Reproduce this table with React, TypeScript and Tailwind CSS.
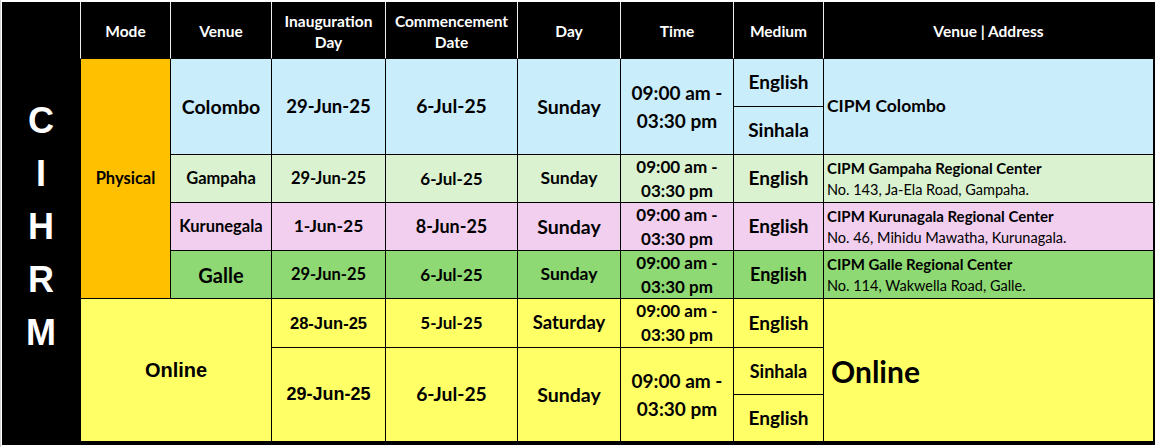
import React from 'react';

// shared cell styles
const line = 'border-r border-b border-black';
const cell = `flex items-center justify-center text-center ${line}`;
const addr = 'flex flex-col justify-center items-start pl-[3px] border-b border-black';
const arial = "font-[family-name:'Liberation_Sans',sans-serif]";

const Head = ({ children, first, last }: { children: React.ReactNode; first?: boolean; last?: boolean }) => (
  <div
    className={`flex items-center justify-center text-center pt-[3px] bg-black text-white text-[15.5px] leading-[21px] border-b border-b-black ${
      last ? '' : 'border-r border-r-[#eeeeee]'
    } ${first ? 'border-l border-l-[#eeeeee]' : ''}`}
  >
    {children}
  </div>
);

export default function App() {
  return (
    <div className="min-h-screen bg-white border-l border-[#d4d4d4] pl-px pt-[2px] font-[family-name:Lato,sans-serif] font-bold text-black">
      <div className="grid w-max grid-cols-[78px_91px_101px_114px_132px_103px_113px_90px_329px] grid-rows-[57px_48px_48px_48px_48px_48px_49px_47px_47px] border-r-2 border-b-[3px] border-black">
        {/* side label */}
        <div className={`row-span-9 bg-black flex flex-col items-center justify-center pt-[9px] text-white text-[36px] leading-[53px] ${arial}`}>
          <span>C</span>
          <span>I</span>
          <span>H</span>
          <span>R</span>
          <span>M</span>
        </div>

        {/* header */}
        <Head first>Mode</Head>
        <Head>Venue</Head>
        <Head>
          Inauguration
          <br />
          Day
        </Head>
        <Head>
          Commencement
          <br />
          Date
        </Head>
        <Head>Day</Head>
        <Head>Time</Head>
        <Head>Medium</Head>
        <Head last>Venue | Address</Head>

        {/* Colombo */}
        <div className={`${cell} border-l row-span-5 bg-[#ffc000] text-[16.5px]`}>Physical</div>
        <div className={`${cell} row-span-2 bg-[#caedfb] text-[19.5px]`}>Colombo</div>
        <div className={`${cell} row-span-2 bg-[#caedfb] text-[18.5px]`}>29-Jun-25</div>
        <div className={`${cell} row-span-2 bg-[#caedfb] text-[19.3px]`}>6-Jul-25</div>
        <div className={`${cell} row-span-2 bg-[#caedfb] text-[19.5px]`}>Sunday</div>
        <div className={`${cell} row-span-2 bg-[#caedfb] text-[19px] leading-[28px]`}>
          09:00 am -
          <br />
          03:30 pm
        </div>
        <div className={`${cell} bg-[#caedfb] text-[19px]`}>English</div>
        <div className={`${addr} row-span-2 bg-[#caedfb] text-[17.5px]`}>CIPM Colombo</div>
        <div className={`${cell} bg-[#caedfb] text-[19px]`}>Sinhala</div>

        {/* Gampaha */}
        <div className={`${cell} bg-[#daf2d0] text-[16.5px]`}>Gampaha</div>
        <div className={`${cell} bg-[#daf2d0] text-[16.5px]`}>29-Jun-25</div>
        <div className={`${cell} bg-[#daf2d0] text-[17px]`}>6-Jul-25</div>
        <div className={`${cell} bg-[#daf2d0] text-[17.5px]`}>Sunday</div>
        <div className={`${cell} bg-[#daf2d0] text-[17px] leading-[24px]`}>
          09:00 am -
          <br />
          03:30 pm
        </div>
        <div className={`${cell} bg-[#daf2d0] text-[19px]`}>English</div>
        <div className={`${addr} bg-[#daf2d0] leading-[21px]`}>
          <span className="text-[15px]">CIPM Gampaha Regional Center</span>
          <span className="text-[14.5px] font-normal">No. 143, Ja-Ela Road, Gampaha.</span>
        </div>

        {/* Kurunegala */}
        <div className={`${cell} bg-[#f2ceef] text-[16.5px]`}>Kurunegala</div>
        <div className={`${cell} bg-[#f2ceef] text-[17.5px]`}>1-Jun-25</div>
        <div className={`${cell} bg-[#f2ceef] text-[18px]`}>8-Jun-25</div>
        <div className={`${cell} bg-[#f2ceef] text-[19.5px]`}>Sunday</div>
        <div className={`${cell} bg-[#f2ceef] text-[17px] leading-[24px]`}>
          09:00 am -
          <br />
          03:30 pm
        </div>
        <div className={`${cell} bg-[#f2ceef] text-[19px]`}>English</div>
        <div className={`${addr} bg-[#f2ceef] leading-[21px]`}>
          <span className="text-[15px]">CIPM Kurunagala Regional Center</span>
          <span className="text-[14.5px] font-normal">No. 46, Mihidu Mawatha, Kurunagala.</span>
        </div>

        {/* Galle */}
        <div className={`${cell} bg-[#8ed973] text-[20px]`}>Galle</div>
        <div className={`${cell} bg-[#8ed973] text-[16.5px]`}>29-Jun-25</div>
        <div className={`${cell} bg-[#8ed973] text-[17px]`}>6-Jul-25</div>
        <div className={`${cell} bg-[#8ed973] text-[17.5px]`}>Sunday</div>
        <div className={`${cell} bg-[#8ed973] text-[17px] leading-[24px]`}>
          09:00 am -
          <br />
          03:30 pm
        </div>
        <div className={`${cell} bg-[#8ed973] text-[18px]`}>English</div>
        <div className={`${addr} bg-[#8ed973] leading-[21px]`}>
          <span className="text-[15px]">CIPM Galle Regional Center</span>
          <span className="text-[14.5px] font-normal">No. 114, Wakwella Road, Galle.</span>
        </div>

        {/* Online */}
        <div className={`${cell} border-l col-span-2 row-span-3 bg-[#ffff66] text-[20px] ${arial}`}>Online</div>
        <div className={`${cell} bg-[#ffff66] text-[16.5px] ${arial}`}>28-Jun-25</div>
        <div className={`${cell} bg-[#ffff66] text-[17px]`}>5-Jul-25</div>
        <div className={`${cell} bg-[#ffff66] text-[18.5px]`}>Saturday</div>
        <div className={`${cell} bg-[#ffff66] text-[17px] leading-[24px]`}>
          09:00 am -
          <br />
          03:30 pm
        </div>
        <div className={`${cell} bg-[#ffff66] text-[19px]`}>English</div>
        <div className="flex items-center pl-[7px] pt-[2px] row-span-3 bg-[#ffff66] text-[30px] border-b border-black">Online</div>

        <div className={`${cell} row-span-2 bg-[#ffff66] text-[18px] ${arial}`}>29-Jun-25</div>
        <div className={`${cell} row-span-2 bg-[#ffff66] text-[19.3px]`}>6-Jul-25</div>
        <div className={`${cell} row-span-2 bg-[#ffff66] text-[19.5px]`}>Sunday</div>
        <div className={`${cell} row-span-2 bg-[#ffff66] text-[19px] leading-[28px]`}>
          09:00 am -
          <br />
          03:30 pm
        </div>
        <div className={`${cell} bg-[#ffff66] text-[18px]`}>Sinhala</div>
        <div className={`${cell} bg-[#ffff66] text-[19px]`}>English</div>
      </div>
    </div>
  );
}
